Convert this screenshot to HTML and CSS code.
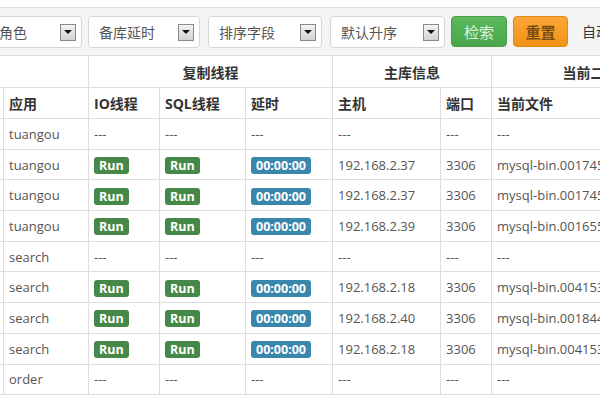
FILE: index.html
```html
<!DOCTYPE html>
<html>
<head>
<meta charset="utf-8">
<link rel="stylesheet" href="styles.css">
</head>
<body>
<div class="page">
  <div class="toolbar">
    <div class="sel sel-first"><span class="sel-text">所有角色</span><span class="arrow"></span></div>
    <div class="sel sel-2"><span class="sel-text">备库延时</span><span class="arrow"></span></div>
    <div class="sel sel-3"><span class="sel-text">排序字段</span><span class="arrow"></span></div>
    <div class="sel sel-4"><span class="sel-text">默认升序</span><span class="arrow"></span></div>
    <button class="btn btn-search">检索</button>
    <button class="btn btn-reset">重置</button>
    <span class="auto">自动刷新</span>
  </div>
  <div class="table-wrap">
    <table class="grid">
      <colgroup>
        <col class="c0"><col class="c1"><col class="c2"><col class="c3"><col class="c4"><col class="c5"><col class="c6"><col class="c7"><col class="c8">
      </colgroup>
      <thead>
        <tr class="group-row">
          <th colspan="2"></th>
          <th colspan="3">复制线程</th>
          <th colspan="2">主库信息</th>
          <th colspan="2">当前二进制日志</th>
        </tr>
        <tr class="head-row">
          <th>角色</th>
          <th>应用</th>
          <th>IO线程</th>
          <th>SQL线程</th>
          <th>延时</th>
          <th>主机</th>
          <th>端口</th>
          <th>当前文件</th>
          <th>位置</th>
        </tr>
      </thead>
      <tbody>
        <tr><td>主库</td><td>tuangou</td><td>---</td><td>---</td><td>---</td><td>---</td><td>---</td><td>---</td><td>---</td></tr>
        <tr><td>备库</td><td>tuangou</td><td><span class="label ok">Run</span></td><td><span class="label ok">Run</span></td><td><span class="label info">00:00:00</span></td><td>192.168.2.37</td><td>3306</td><td>mysql-bin.001745</td><td>10238</td></tr>
        <tr><td>备库</td><td>tuangou</td><td><span class="label ok">Run</span></td><td><span class="label ok">Run</span></td><td><span class="label info">00:00:00</span></td><td>192.168.2.37</td><td>3306</td><td>mysql-bin.001745</td><td>10238</td></tr>
        <tr><td>备库</td><td>tuangou</td><td><span class="label ok">Run</span></td><td><span class="label ok">Run</span></td><td><span class="label info">00:00:00</span></td><td>192.168.2.39</td><td>3306</td><td>mysql-bin.001655</td><td>20417</td></tr>
        <tr><td>主库</td><td>search</td><td>---</td><td>---</td><td>---</td><td>---</td><td>---</td><td>---</td><td>---</td></tr>
        <tr><td>备库</td><td>search</td><td><span class="label ok">Run</span></td><td><span class="label ok">Run</span></td><td><span class="label info">00:00:00</span></td><td>192.168.2.18</td><td>3306</td><td>mysql-bin.004153</td><td>33120</td></tr>
        <tr><td>备库</td><td>search</td><td><span class="label ok">Run</span></td><td><span class="label ok">Run</span></td><td><span class="label info">00:00:00</span></td><td>192.168.2.40</td><td>3306</td><td>mysql-bin.001844</td><td>40821</td></tr>
        <tr><td>备库</td><td>search</td><td><span class="label ok">Run</span></td><td><span class="label ok">Run</span></td><td><span class="label info">00:00:00</span></td><td>192.168.2.18</td><td>3306</td><td>mysql-bin.004153</td><td>33120</td></tr>
        <tr><td>主库</td><td>order</td><td>---</td><td>---</td><td>---</td><td>---</td><td>---</td><td>---</td><td>---</td></tr>
      </tbody>
    </table>
  </div>
</div>
</body>
</html>
```
FILE: styles.css
```css
html, body {
  margin: 0;
  padding: 0;
  background: #ffffff;
  width: 600px;
  height: 400px;
  overflow: hidden;
}
.page {
  padding-top: 7px;
  font-family: "Open Sans", "Noto Sans CJK SC", sans-serif;
  color: #555;
}
.toolbar {
  display: flex;
  align-items: flex-start;
  height: 48px;
  padding-top: 8px;
  box-sizing: border-box;
  background: #f4f4f4;
  border-top: 1px solid #dcdcdc;
  white-space: nowrap;
}
.sel {
  display: flex;
  align-items: center;
  justify-content: space-between;
  height: 32px;
  box-sizing: border-box;
  background: #fff;
  border: 1px solid #d6d6d6;
  border-radius: 4px;
  padding: 0 5px 0 10px;
  font-family: "Noto Sans CJK SC", sans-serif;
  font-size: 14px;
  color: #555;
  flex: none;
}
.sel-first { width: 122px; margin-left: -40px; margin-right: 6px; }
.sel-2 { width: 112px; margin-right: 8px; }
.sel-3 { width: 114px; margin-right: 8px; }
.sel-4 { width: 115px; margin-right: 6px; }
.arrow {
  width: 16px;
  height: 17px;
  box-sizing: border-box;
  border: 1px solid #8a8a8a;
  background: linear-gradient(#f4f4f4, #d2d2d2);
  display: flex;
  align-items: center;
  justify-content: center;
}
.arrow::after {
  content: "";
  width: 0;
  height: 0;
  border-left: 4px solid transparent;
  border-right: 4px solid transparent;
  border-top: 4px solid #111;
}
.btn {
  height: 31px;
  border-radius: 4px;
  font-family: "Noto Sans CJK SC", sans-serif;
  font-size: 15px;
  padding: 0;
  flex: none;
}
.btn-search {
  width: 56px;
  margin-right: 6px;
  background: linear-gradient(#5cb85c, #4aa64a);
  border: 1px solid #4a9e4a;
  color: #dff2df;
}
.btn-reset {
  width: 55px;
  margin-right: 14px;
  background: linear-gradient(#fba73a, #f29313);
  border: 1px solid #e08a10;
  color: #7a4d12;
  font-weight: bold;
}
.auto {
  font-family: "Noto Sans CJK SC", sans-serif;
  font-size: 14px;
  color: #333;
  line-height: 31px;
}
.table-wrap {
  overflow: hidden;
  width: 600px;
}
.grid {
  border-collapse: collapse;
  table-layout: fixed;
  margin-left: -37px;
  width: 768px;
  font-size: 13px;
}
.c0 { width: 40px; }
.c1 { width: 85px; }
.c2 { width: 71px; }
.c3 { width: 86px; }
.c4 { width: 87px; }
.c5 { width: 108px; }
.c6 { width: 51px; }
.c7 { width: 160px; }
.c8 { width: 80px; }
.grid th, .grid td {
  border: 1px solid #dedede;
  padding: 0 5px;
  text-align: left;
  white-space: nowrap;
  overflow: hidden;
  vertical-align: middle;
}
.grid th {
  font-family: "Open Sans", "Noto Sans CJK SC", sans-serif;
  font-weight: bold;
  color: #333;
  font-size: 14px;
}
.group-row th {
  height: 31px;
  text-align: center;
}
.head-row th {
  height: 30px;
}
.grid td {
  height: 29.7px;
  color: #555;
}
.label {
  display: inline-block;
  font-size: 12.5px;
  font-weight: bold;
  line-height: 15px;
  padding: 1px 5px;
  border-radius: 3px;
  color: #fff;
  vertical-align: middle;
}
.label.ok { background: #468847; }
.label.info { background: #3a87ad; }
```
